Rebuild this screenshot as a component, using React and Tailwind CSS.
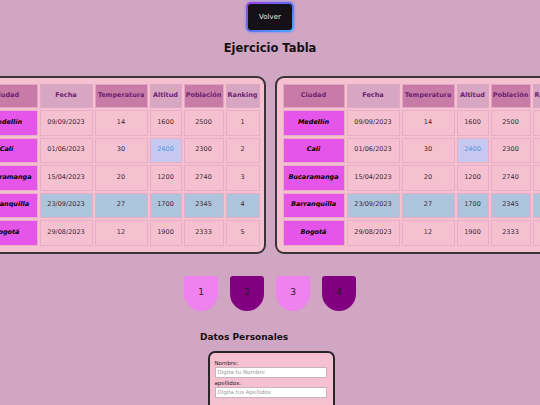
import React from "react";

const rows = [
  { city: "Medellín", date: "09/09/2023", temp: "14", alt: "1600", pop: "2500", rank: "1" },
  { city: "Cali", date: "01/06/2023", temp: "30", alt: "2400", pop: "2300", rank: "2", altHi: true },
  { city: "Bucaramanga", date: "15/04/2023", temp: "20", alt: "1200", pop: "2740", rank: "3" },
  { city: "Barranquilla", date: "23/09/2023", temp: "27", alt: "1700", pop: "2345", rank: "4", blue: true },
  { city: "Bogotá", date: "29/08/2023", temp: "12", alt: "1900", pop: "2333", rank: "5" },
];

const font = { fontFamily: '"DejaVu Sans", "Noto Sans", sans-serif' };

function Table() {
  const dark = "bg-[#c97ba8]";
  const light = "bg-[#d6a6c3]";
  const th = "h-[24px] border border-[#e2a6c2] text-[6.5px] font-bold text-[#6e1f70] text-center p-0";
  const td = "h-[25.5px] border border-[#e8aec8] text-[6.5px] text-[#3a2a35] text-center p-0";
  return (
    <div className="w-[298px] shrink-0 rounded-[9px] border-2 border-[#3a3438] bg-[#f5c1d1] p-[4px]">
      <table className="table-fixed border-separate border-spacing-[2px] w-[286px]">
        <colgroup>
          <col className="w-[62px]" />
          <col className="w-[53px]" />
          <col className="w-[53px]" />
          <col className="w-[32px]" />
          <col className="w-[40px]" />
          <col className="w-[34px]" />
        </colgroup>
        <thead>
          <tr>
            <th className={`${th} ${dark}`}>Ciudad</th>
            <th className={`${th} ${light}`}>Fecha</th>
            <th className={`${th} ${dark}`}>Temperatura</th>
            <th className={`${th} ${light}`}>Altitud</th>
            <th className={`${th} ${dark}`}>Población</th>
            <th className={`${th} ${light}`}>Ranking</th>
          </tr>
        </thead>
        <tbody>
          {rows.map((r) => {
            const bg = r.blue ? "bg-[#adc5dc]" : "bg-[#f5c1d1]";
            return (
              <tr key={r.city}>
                <td className="h-[25.5px] border border-[#e8aec8] bg-[#e655ea] text-[6.5px] font-bold italic text-black text-center p-0">{r.city}</td>
                <td className={`${td} ${bg}`}>{r.date}</td>
                <td className={`${td} ${bg}`}>{r.temp}</td>
                {r.altHi ? (
                  <td className="h-[25.5px] border border-[#e8aec8] bg-[#c6c8f2] text-[6.5px] text-[#4f9ce0] text-center p-0">{r.alt}</td>
                ) : (
                  <td className={`${td} ${bg}`}>{r.alt}</td>
                )}
                <td className={`${td} ${bg}`}>{r.pop}</td>
                <td className={`${td} ${bg}`}>{r.rank}</td>
              </tr>
            );
          })}
        </tbody>
      </table>
    </div>
  );
}

export default function App() {
  return (
    <div className="w-[540px] h-[405px] overflow-hidden bg-[#d0a6c2] flex flex-col items-center" style={font}>
      <div className="shrink-0 mt-[2px] w-[48px] h-[30px] rounded-[5px] p-[2px] bg-gradient-to-br from-[#9a3ce8] via-[#5a6cf0] to-[#3cb0ff] shadow-[0_0_3px_#6a8cff]">
        <div className="w-full h-full rounded-[3px] bg-[#141218] flex items-center justify-center text-[7px] text-[#e8e8e8]">Volver</div>
      </div>
      <div className="shrink-0 mt-[8px] text-[11.5px] font-bold text-[#141014] leading-[16px]">Ejercicio Tabla</div>
      <div className="shrink-0 mt-[20px] flex gap-[9px] justify-center w-[540px]">
        <Table />
        <Table />
      </div>
      <div className="shrink-0 mt-[22px] flex gap-[12px]">
        {["1", "2", "3", "4"].map((n, i) => (
          <div
            key={n}
            className={`w-[34px] h-[35px] rounded-t-[3px] rounded-b-[17px] flex items-center justify-center text-[9px] text-[#2a1a2a] ${i % 2 === 0 ? "bg-[#ee82ee]" : "bg-[#800080]"}`}
          >
            {n}
          </div>
        ))}
      </div>
      <div className="shrink-0 mt-[20px] w-[140px] text-[9px] font-bold text-[#141014] leading-[12px]">Datos Personales</div>
      <div className="shrink-0 mt-[8px] ml-[2px] w-[127px] h-[70px] rounded-[7px] border-2 border-[#2a2428] bg-[#f5c1d1] px-[5px] pt-[7px]">
        <div className="text-[5.5px] text-[#2a1a2a] leading-[7px]">Nombre:</div>
        <div className="w-[112px] h-[11px] border border-[#c8b4c0] bg-white text-[5.5px] text-[#9a9a9a] px-[2px] leading-[9px]">Digita tu Nombre</div>
        <div className="mt-[2px] text-[5.5px] text-[#2a1a2a] leading-[7px]">apellidos:</div>
        <div className="w-[112px] h-[11px] border border-[#c8b4c0] bg-white text-[5.5px] text-[#9a9a9a] px-[2px] leading-[9px]">Digita tus Apellidos</div>
      </div>
    </div>
  );
}
